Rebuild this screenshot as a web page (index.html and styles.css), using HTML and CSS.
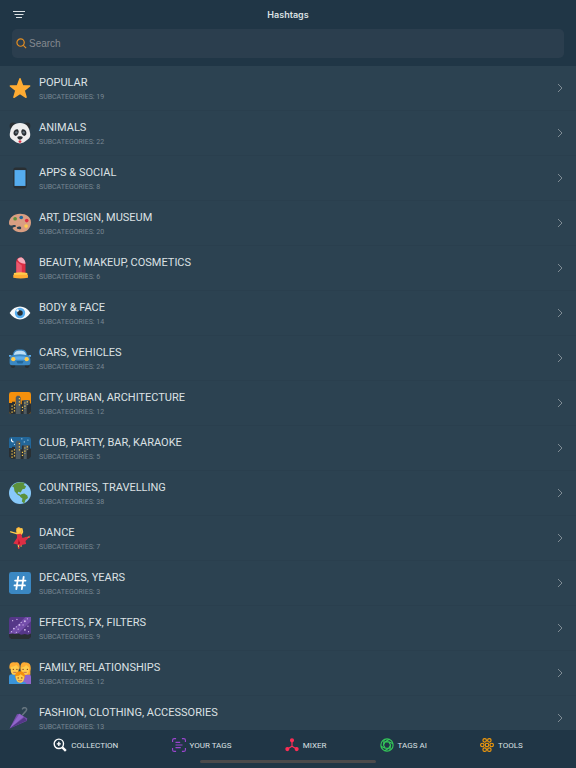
FILE: index.html
```html
<!DOCTYPE html>
<html lang="en">
<head>
    <meta charset="UTF-8">
    <meta name="viewport" content="width=device-width, initial-scale=1.0">
    <title>Hashtags</title>
    <link rel="stylesheet" href="styles.css">
</head>
<body>
    <header class="header">
        <div class="title-bar">
            <button type="button" class="menu-button" aria-label="Sort and filter">
                <svg viewBox="0 0 14 10"><path d="M1 1.500h12M2.500 4.500h9M4 7.500h6"/></svg>
            </button>
            <h1>Hashtags</h1>
        </div>
        <label class="search">
            <svg viewBox="0 0 12 12"><circle cx="5" cy="5" r="4"/><path d="M8 8l3 3"/></svg>
            <input type="search" placeholder="Search" aria-label="Search">
        </label>
    </header>

    <main class="content">
        <ul class="category-list">
            <li><a class="category" href="#popular">
                <svg class="emoji" viewBox="0 0 36 36"><path fill="#ffac33" stroke="#ffac33" stroke-width="2.500" stroke-linejoin="round" d="M18 3l4.200 11.200 11.600.4-9.100 7.300 3.200 11.300L18 26.700l-9.900 6.500 3.200-11.300-9.100-7.300 11.600-.4z"/></svg>
                <span class="category-text"><span class="category-name">POPULAR</span><span class="category-count">SUBCATEGORIES: 19</span></span>
                <svg class="chevron" viewBox="0 0 6 10"><path d="M1 1l4 4-4 4"/></svg>
            </a></li>
            <li><a class="category" href="#animals">
                <svg class="emoji" viewBox="0 0 36 36">
                    <circle cx="6.500" cy="6.500" r="5.500" fill="#292f33"/><circle cx="29.500" cy="6.500" r="5.500" fill="#292f33"/>
                    <path fill="#eee" d="M18 1.500C8 1.500 3 8 2 16c-2 7 0 11 5 14 4 3 6 5 11 5s7-2 11-5c5-3 7-7 5-14C33 8 28 1.500 18 1.500z"/>
                    <path fill="#292f33" d="M8 21c-2-5 2-10 6-9 4 3 1 10-3 11-1 0-2-1-3-2zM28 21c2-5-2-10-6-9-4 3-1 10 3 11 1 0 2-1 3-2z"/>
                    <circle cx="12" cy="17" r="2" fill="#66757f"/><circle cx="24" cy="17" r="2" fill="#66757f"/>
                    <path fill="#292f33" d="M13.500 25c1-2 8-2 9 0 0 2-3 4-4.500 4s-4.500-2-4.500-4z"/><path fill="#dd2e44" d="M15.500 31q2.500-2 5 0c0 4-5 4-5 0z"/>
                </svg>
                <span class="category-text"><span class="category-name">ANIMALS</span><span class="category-count">SUBCATEGORIES: 22</span></span>
                <svg class="chevron" viewBox="0 0 6 10"><path d="M1 1l4 4-4 4"/></svg>
            </a></li>
            <li><a class="category" href="#apps">
                <svg class="emoji" viewBox="0 0 36 36"><rect x="7" y="1" width="22" height="34" rx="4" fill="#292f33"/><path fill="#55acee" d="M9 5h18v26H9z"/></svg>
                <span class="category-text"><span class="category-name">APPS &amp; SOCIAL</span><span class="category-count">SUBCATEGORIES: 8</span></span>
                <svg class="chevron" viewBox="0 0 6 10"><path d="M1 1l4 4-4 4"/></svg>
            </a></li>
            <li><a class="category" href="#art">
                <svg class="emoji" viewBox="0 0 36 36">
                    <path fill="#d99e82" d="M18 3C8 3 0 10 0 18c0 2 1 4 3 4 4 0 5-2 8 0 3 3-6 2-5 5 2 4 7 6 14 6 9 0 16-7 16-16S28 3 18 3z"/><path fill="#2c4251" d="M13 25c2-2 7-2 7 1 0 2-2 3-4 2-2 0-4-1-3-3z"/>
                    <circle cx="10" cy="11" r="3" fill="#5c913b"/><circle cx="20" cy="9" r="3" fill="#226699"/><circle cx="29" cy="14" r="3" fill="#dd2e44"/><circle cx="28" cy="23" r="3" fill="#ffcc4d"/>
                </svg>
                <span class="category-text"><span class="category-name">ART, DESIGN, MUSEUM</span><span class="category-count">SUBCATEGORIES: 20</span></span>
                <svg class="chevron" viewBox="0 0 6 10"><path d="M1 1l4 4-4 4"/></svg>
            </a></li>
            <li><a class="category" href="#beauty">
                <svg class="emoji" viewBox="0 0 36 36">
                    <path fill="#dd2e44" d="M12 26V7c0-4 4-7 9-6 4 2 6 8 6 12v13z"/><path fill="#ea596e" d="M12 7l9 7v12h-9z"/><path fill="#f4abba" d="M14 4c2-3 4-3 7-3 4 2 6 7 6 10-5 0-11-2-13-7z"/>
                    <path fill="#ffcc4d" d="M8 26q11-2 22 0v4H8z"/><path fill="#ffac33" d="M7 29h24v5q-12 2-24 0z"/>
                </svg>
                <span class="category-text"><span class="category-name">BEAUTY, MAKEUP, COSMETICS</span><span class="category-count">SUBCATEGORIES: 6</span></span>
                <svg class="chevron" viewBox="0 0 6 10"><path d="M1 1l4 4-4 4"/></svg>
            </a></li>
            <li><a class="category" href="#body">
                <svg class="emoji" viewBox="0 0 36 36"><path fill="#f5f8fa" d="M1 18C10 4 26 4 35 18 26 32 10 32 1 18z"/><circle cx="18" cy="18" r="8.500" fill="#55acee"/><circle cx="18" cy="18" r="4.500" fill="#292f33"/><circle cx="14" cy="14" r="2" fill="#f5f8fa"/></svg>
                <span class="category-text"><span class="category-name">BODY &amp; FACE</span><span class="category-count">SUBCATEGORIES: 14</span></span>
                <svg class="chevron" viewBox="0 0 6 10"><path d="M1 1l4 4-4 4"/></svg>
            </a></li>
            <li><a class="category" href="#cars">
                <svg class="emoji" viewBox="0 0 36 36">
                    <path fill="#292f33" d="M3 25h7v7c0 3-7 3-7 0zM26 25h7v7c0 3-7 3-7 0z"/>
                    <path fill="#3b88c3" d="M1 20c0-4 4-6 5-7 2-7 3-9 12-9s10 2 12 9c1 1 5 3 5 7v6c0 3-3 4-6 4H7c-3 0-6-1-6-4z"/>
                    <path fill="#bbddf5" d="M8 13c1-5 3-7 10-7s9 2 10 7q-10-2-20 0z"/><path fill="#5dadec" d="M4 17q14-4 28 0l-4 4H8z"/><path fill="#226699" d="M12 23h12l-2 4h-8z"/>
                    <circle cx="7" cy="20" r="3.500" fill="#ffcc4d"/><circle cx="29" cy="20" r="3.500" fill="#ffcc4d"/><path fill="#5dadec" d="M0 13h4v3H0zM32 13h4v3h-4z"/>
                </svg>
                <span class="category-text"><span class="category-name">CARS, VEHICLES</span><span class="category-count">SUBCATEGORIES: 24</span></span>
                <svg class="chevron" viewBox="0 0 6 10"><path d="M1 1l4 4-4 4"/></svg>
            </a></li>
            <li><a class="category" href="#city">
                <svg class="emoji" viewBox="0 0 36 36">
                    <rect width="36" height="36" rx="4" fill="#f4900c"/>
                    <path fill="#292f33" d="M0 18h5v-2h5v4h11v-6h13v5h2v13q0 4-4 4H4q-4 0-4-4z"/><path fill="#4e5a61" d="M11 36V9l2-3h4l2 3v27zM24 36V13h8v8l-3 1v14z"/>
                    <path stroke="#ffcc4d" stroke-width="2" stroke-dasharray="2 3" d="M17 10v15M5 22v12M9 20v13M22 24v9M26 17v11M30 15v6"/>
                </svg>
                <span class="category-text"><span class="category-name">CITY, URBAN, ARCHITECTURE</span><span class="category-count">SUBCATEGORIES: 12</span></span>
                <svg class="chevron" viewBox="0 0 6 10"><path d="M1 1l4 4-4 4"/></svg>
            </a></li>
            <li><a class="category" href="#club">
                <svg class="emoji" viewBox="0 0 36 36">
                    <rect width="36" height="36" rx="4" fill="#226699"/><path fill="#fff" d="M5 2c-4 2-1 9 4 6-3 0-5-3-4-6z"/>
                    <g fill="#bbddf5"><circle cx="21" cy="3" r="1"/><circle cx="25" cy="8" r="1"/><circle cx="31" cy="5" r="1"/><circle cx="9" cy="12" r="1"/></g>
                    <path fill="#292f33" d="M0 18h5v-2h5v4h11v-6h13v5h2v13q0 4-4 4H4q-4 0-4-4z"/><path fill="#4e5a61" d="M11 36V9l2-3h4l2 3v27zM24 36V13h8v8l-3 1v14z"/>
                    <path stroke="#ffcc4d" stroke-width="2" stroke-dasharray="2 3" d="M17 10v15M5 22v12M9 20v13M22 24v9M26 17v11M30 15v6"/>
                </svg>
                <span class="category-text"><span class="category-name">CLUB, PARTY, BAR, KARAOKE</span><span class="category-count">SUBCATEGORIES: 5</span></span>
                <svg class="chevron" viewBox="0 0 6 10"><path d="M1 1l4 4-4 4"/></svg>
            </a></li>
            <li><a class="category" href="#countries">
                <svg class="emoji" viewBox="0 0 36 36"><circle cx="18" cy="18" r="18" fill="#88c9f9"/><path fill="#5c913b" d="M8 4c5-3 12-5 18-2l-2 3 4 2-2 4-4 1-3 5-4-1-1 3 5 2 1 3-6-3-5-6-1-6-3-2zM20 20l5-1 5 3 1 4-4 3-2 6-4-3 1-5-4-3z"/></svg>
                <span class="category-text"><span class="category-name">COUNTRIES, TRAVELLING</span><span class="category-count">SUBCATEGORIES: 38</span></span>
                <svg class="chevron" viewBox="0 0 6 10"><path d="M1 1l4 4-4 4"/></svg>
            </a></li>
            <li><a class="category" href="#dance">
                <svg class="emoji" viewBox="0 0 36 36">
                    <path fill="#ffac33" d="M12 2l4-2 5 3v8l-4 3-5-3z"/><path fill="none" stroke="#ffcc4d" stroke-width="2.500" stroke-linecap="round" stroke-linejoin="round" d="M3 8l7 2 6 2M20 12l2-4-1-5"/><circle cx="16" cy="6" r="4" fill="#ffcc4d"/>
                    <path stroke="#ffcc4d" stroke-width="2" d="M15 29l1 5M19 28l1 4M27 18l7-2"/><path fill="#dd2e44" d="M13 12l7-1 2 7 7-2 3 2-5 5 1 5-6 1-4 3-3-3-8-2 6-9z"/><path fill="#dd2e44" d="M14 33h3v3h-2zM33 14l2 1-1 3-2-1z"/><path fill="#a0041e" d="M16 20l2 7-3 1z"/>
                </svg>
                <span class="category-text"><span class="category-name">DANCE</span><span class="category-count">SUBCATEGORIES: 7</span></span>
                <svg class="chevron" viewBox="0 0 6 10"><path d="M1 1l4 4-4 4"/></svg>
            </a></li>
            <li><a class="category" href="#decades">
                <svg class="emoji" viewBox="0 0 36 36"><rect width="36" height="36" rx="4" fill="#3b88c3"/><path fill="none" stroke="#fff" stroke-width="3" stroke-linecap="round" d="M15 8l-3 20M24 8l-3 20M10 14h17M9 22h17"/></svg>
                <span class="category-text"><span class="category-name">DECADES, YEARS</span><span class="category-count">SUBCATEGORIES: 3</span></span>
                <svg class="chevron" viewBox="0 0 6 10"><path d="M1 1l4 4-4 4"/></svg>
            </a></li>
            <li><a class="category" href="#effects">
                <svg class="emoji" viewBox="0 0 36 36">
                    <rect width="36" height="36" rx="4" fill="#553788"/><path fill="#744eaa" d="M0 27L27 0h9v7L12 30H0z"/>
                    <g fill="#d5c0ee"><circle cx="6" cy="6" r="1"/><circle cx="13" cy="4" r="1"/><circle cx="30" cy="3" r="1"/><circle cx="26" cy="7" r="1.500"/><circle cx="20" cy="9" r="1"/><circle cx="17" cy="13" r="1.500"/><circle cx="23" cy="13" r="1"/><circle cx="12" cy="16" r="1"/><circle cx="8" cy="19" r="1.500"/><circle cx="15" cy="20" r="1"/><circle cx="31" cy="15" r="1"/><circle cx="26" cy="21" r="1.500"/><circle cx="4" cy="24" r="1"/><circle cx="12" cy="25" r="1"/><circle cx="32" cy="24" r="1"/></g>
                    <path fill="#292f33" d="M0 28l6-1 4 1 5-1 5 2 6-1 5 1 5-2v5q0 4-4 4H4q-4 0-4-4z"/>
                </svg>
                <span class="category-text"><span class="category-name">EFFECTS, FX, FILTERS</span><span class="category-count">SUBCATEGORIES: 9</span></span>
                <svg class="chevron" viewBox="0 0 6 10"><path d="M1 1l4 4-4 4"/></svg>
            </a></li>
            <li><a class="category" href="#family">
                <svg class="emoji" viewBox="0 0 36 36">
                    <path fill="#3b94d9" d="M0 36V24q0-4 5-4h13v16z"/><path fill="#9266cc" d="M18 36V20h13q5 0 5 4v12z"/>
                    <path fill="#ffac33" d="M1 11C-1 2 5-1 10 1c6-2 9 4 7 11zM19 14C17 3 22-1 27 1c7-1 10 5 8 14v6H21z"/>
                    <path fill="#ffcc4d" d="M3 8q6 0 9-3l4 4c0 8-2 12-7 12S2 16 3 8zM20 9q6 0 8-4l5 4c0 8-2 12-6 12s-7-4-7-12z"/>
                    <path fill="#3b94d9" d="M8 36v-2q10-5 20 0v2z"/><circle cx="18" cy="23" r="8" fill="#f4900c"/><path fill="#ffcc4d" d="M11 23q6 0 8-3l6 4c0 7-3 10-7 10s-7-4-7-11z"/>
                    <g fill="#662113"><circle cx="7" cy="12" r="1"/><circle cx="13" cy="12" r="1"/><circle cx="23" cy="12" r="1"/><circle cx="30" cy="12" r="1"/><circle cx="15" cy="26" r="1"/><circle cx="21" cy="26" r="1"/></g>
                    <path fill="none" stroke="#c1694f" stroke-width="1.500" d="M7 17h5M24 17h5M15 30q3 2 6 0"/>
                </svg>
                <span class="category-text"><span class="category-name">FAMILY, RELATIONSHIPS</span><span class="category-count">SUBCATEGORIES: 12</span></span>
                <svg class="chevron" viewBox="0 0 6 10"><path d="M1 1l4 4-4 4"/></svg>
            </a></li>
            <li><a class="category" href="#fashion">
                <svg class="emoji" viewBox="0 0 36 36"><path fill="none" stroke="#66757f" stroke-width="2.500" stroke-linecap="round" d="M22 13l6-7c3-4-3-7-6-3"/><path fill="#744eaa" d="M1 35L13 12l4-1 13 8-1 4z"/><path fill="#9266cc" d="M1 35l16-24 7 5z"/><path fill="#553788" d="M1 35l24-18 4 5z"/></svg>
                <span class="category-text"><span class="category-name">FASHION, CLOTHING, ACCESSORIES</span><span class="category-count">SUBCATEGORIES: 13</span></span>
                <svg class="chevron" viewBox="0 0 6 10"><path d="M1 1l4 4-4 4"/></svg>
            </a></li>
        </ul>
    </main>

    <footer class="footer">
        <nav class="tabs">
            <a class="tab tab-collection" href="#collection">
                <svg viewBox="0 0 24 24"><circle cx="10" cy="10" r="8"/><path d="M16 16l6 6" stroke-width="4"/><path d="M10 6.500v7M6.500 10h7"/></svg>
                COLLECTION
            </a>
            <a class="tab tab-tags" href="#your-tags">
                <svg viewBox="0 0 24 24"><path d="M1 7V4q0-3 3-3h3M17 1h3q3 0 3 3v3M23 17v3q0 3-3 3h-3M7 23H4q-3 0-3-3v-3M6 7.500h8M6 12h12M6 16.500h9"/></svg>
                YOUR TAGS
            </a>
            <a class="tab tab-mixer" href="#mixer">
                <svg viewBox="0 0 24 24"><path d="M12 5v9M12 14l-8 5M12 14l8 5"/><g fill="currentColor"><circle cx="12" cy="4" r="2.500"/><circle cx="4" cy="19" r="2.500"/><circle cx="20" cy="19" r="2.500"/></g></svg>
                MIXER
            </a>
            <a class="tab tab-ai" href="#tags-ai">
                <svg viewBox="0 0 24 24"><circle cx="12" cy="12" r="10.500"/><path d="M9 6.500h6l3 5.500-3 5.500H9L6 12zM9 6.500L16 2M15 6.500L22.500 10M18 12l-1 9M15 17.500L8 22M9 17.500L1.500 14M6 12l1-9"/></svg>
                TAGS AI
            </a>
            <a class="tab tab-tools" href="#tools">
                <svg viewBox="0 0 24 24"><circle cx="12" cy="12" r="3"/><circle cx="4" cy="12" r="3"/><circle cx="20" cy="12" r="3"/><circle cx="8" cy="4" r="3"/><circle cx="16" cy="4" r="3"/><circle cx="8" cy="20" r="3"/><circle cx="16" cy="20" r="3"/></svg>
                TOOLS
            </a>
        </nav>
        <div class="home-indicator"></div>
    </footer>
</body>
</html>
```

FILE: styles.css
```css
* {
    box-sizing: border-box;
}

body {
    margin: 0;
    height: 100vh;
    display: flex;
    flex-direction: column;
    background: #2c4251;
    color: #dce1e4;
    font-family: Roboto, "Liberation Sans", sans-serif;
}

svg {
    display: block;
    flex: none;
}

/* Header */
.header {
    padding: 0 12px 8px;
    background: #203646;
}

.title-bar {
    display: grid;
    grid-template-columns: 14px 1fr 14px;
    align-items: center;
    height: 29px;
}

.title-bar h1 {
    margin: 0;
    font-family: Inter, sans-serif;
    font-size: 9px;
    font-weight: 600;
    text-align: center;
}

.menu-button {
    padding: 0;
    border: none;
    background: none;
    color: #dce1e4;
    cursor: pointer;
}

.menu-button svg {
    width: 14px;
    height: 10px;
    fill: none;
    stroke: currentColor;
}

.search {
    display: flex;
    align-items: center;
    gap: 2px;
    height: 29px;
    padding: 0 4px;
    border-radius: 5px;
    background: #2b3e4e;
}

.search svg {
    width: 11px;
    height: 11px;
    fill: none;
    stroke: #e58e21;
    stroke-width: 1.3;
}

.search input {
    flex: 1;
    min-width: 0;
    padding: 0;
    border: none;
    outline: none;
    background: none;
    color: #dce1e4;
    font-family: "Liberation Sans", Arial, sans-serif;
    font-size: 10px;
}

.search input::placeholder {
    color: #84898f;
}

/* Categories */
.content {
    flex: 1;
    min-height: 0;
    overflow-y: auto;
    scrollbar-width: none;
}

.category-list {
    margin: 0;
    padding: 0;
    list-style: none;
}

.category {
    display: flex;
    align-items: center;
    gap: 8px;
    height: 45px;
    padding: 0 13px 0 9px;
    border-bottom: 1px solid #2a3f4e;
    color: #dce1e4;
    text-decoration: none;
}

.emoji {
    width: 22px;
    height: 22px;
}

.category-text {
    display: flex;
    flex: 1;
    flex-direction: column;
    gap: 2px;
    padding-top: 2px;
}

.category-name {
    font-size: 11px;
    line-height: 14px;
}

.category-count {
    color: #788791;
    font-size: 7px;
    line-height: 10px;
}

.chevron {
    width: 6px;
    height: 10px;
    fill: none;
    stroke: #7e8b94;
}

/* Bottom tabs */
.footer {
    height: 38px;
    background: #203646;
}

.tabs {
    display: flex;
    justify-content: space-evenly;
    align-items: center;
    height: 30px;
}

.tab {
    display: flex;
    align-items: center;
    gap: 4px;
    color: #dce1e4;
    font-size: 8px;
    text-decoration: none;
}

.tab svg {
    width: 14px;
    height: 14px;
    fill: none;
    stroke: currentColor;
    stroke-width: 2;
}

.tab-collection svg {
    color: #fff;
    stroke-width: 2.4;
}

.tab-tags svg {
    color: #9b45cf;
}

.tab-mixer svg {
    color: #ff2d55;
}

.tab-ai svg {
    color: #34c759;
}

.tab-tools svg {
    color: #f59b0b;
}

.home-indicator {
    width: 176px;
    height: 3px;
    margin: 0 auto;
    border-radius: 2px;
    background: #4c4a4b;
}
```
